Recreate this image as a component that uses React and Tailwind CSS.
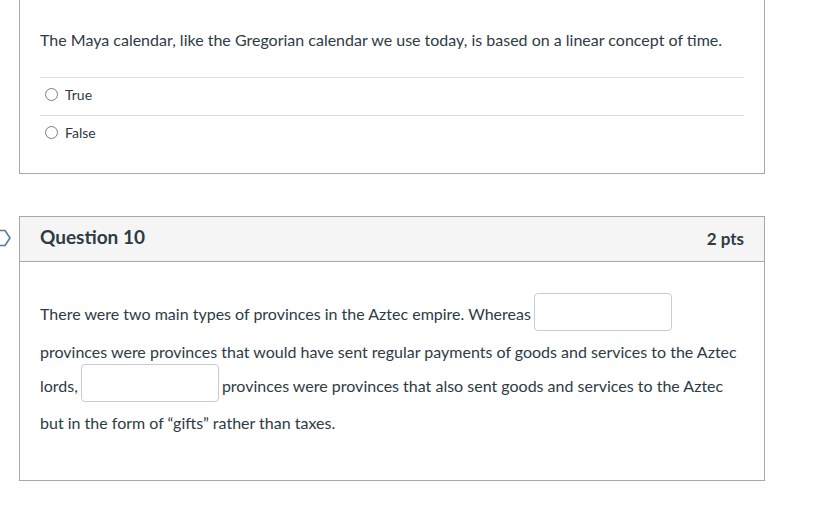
import React from "react";

function Radio({ label }) {
  return (
    <div className="flex items-center border-t border-[#dcdcdc] h-[38px] pb-[5px] pl-[5px]">
      <span className="w-[13px] h-[13px] rounded-full border border-[#7b7b7b] bg-white" />
      <span className="ml-[7px] text-[14px]">{label}</span>
    </div>
  );
}

function Blank() {
  return (
    <input
      type="text"
      className="inline-block align-[2px] w-[138px] h-[38px] border border-[#c7cdd1] rounded-[4px] bg-white mx-[3px] -mt-[5px] mb-[4px]"
    />
  );
}

export default function App() {
  return (
    <div
      className="relative min-h-[512px] bg-white text-[#2d3b45] overflow-hidden"
      style={{ fontFamily: "Lato, 'Liberation Sans', sans-serif" }}
    >
      {/* previous question, cut off at the top */}
      <div className="ml-[19px] w-[746px] -mt-px border border-[#a8a8a8] px-5 pt-[28px] pb-[20px]">
        <p className="text-[16px] leading-[24px] mb-[25px]">
          The Maya calendar, like the Gregorian calendar we use today, is based on a linear concept of time.
        </p>
        <Radio label="True" />
        <Radio label="False" />
      </div>

      {/* question 10 */}
      <div className="relative mt-[42px] ml-[19px] w-[746px] border border-[#a8a8a8]">
        <svg
          className="absolute left-[-20px] top-[12px]"
          width="12"
          height="18"
          viewBox="0 0 12 18"
        >
          <path d="M-4 1.5 H5 L10 9 L5 16.5 H-4" fill="none" stroke="#5b7a98" strokeWidth="1.6" strokeLinejoin="round" />
        </svg>
        <div className="flex items-center justify-between h-[45px] bg-[#f5f5f5] border-b border-[#a8a8a8] px-5">
          <h2 className="text-[19px] font-bold mb-[3px]">Question 10</h2>
          <span className="text-[17px] font-bold">2 pts</span>
        </div>
        <div className="pl-5 pr-[24px] pt-[35px] pb-[40px]">
          <p className="text-[16px] leading-[34px]">
            There were two main types of provinces in the Aztec empire. Whereas
            <Blank />
            provinces were provinces that would have sent regular payments of goods and services to the Aztec
            lords,
            <Blank />
            provinces were provinces that also sent goods and services to the Aztec but in the form of “gifts” rather than taxes.
          </p>
        </div>
      </div>
    </div>
  );
}
